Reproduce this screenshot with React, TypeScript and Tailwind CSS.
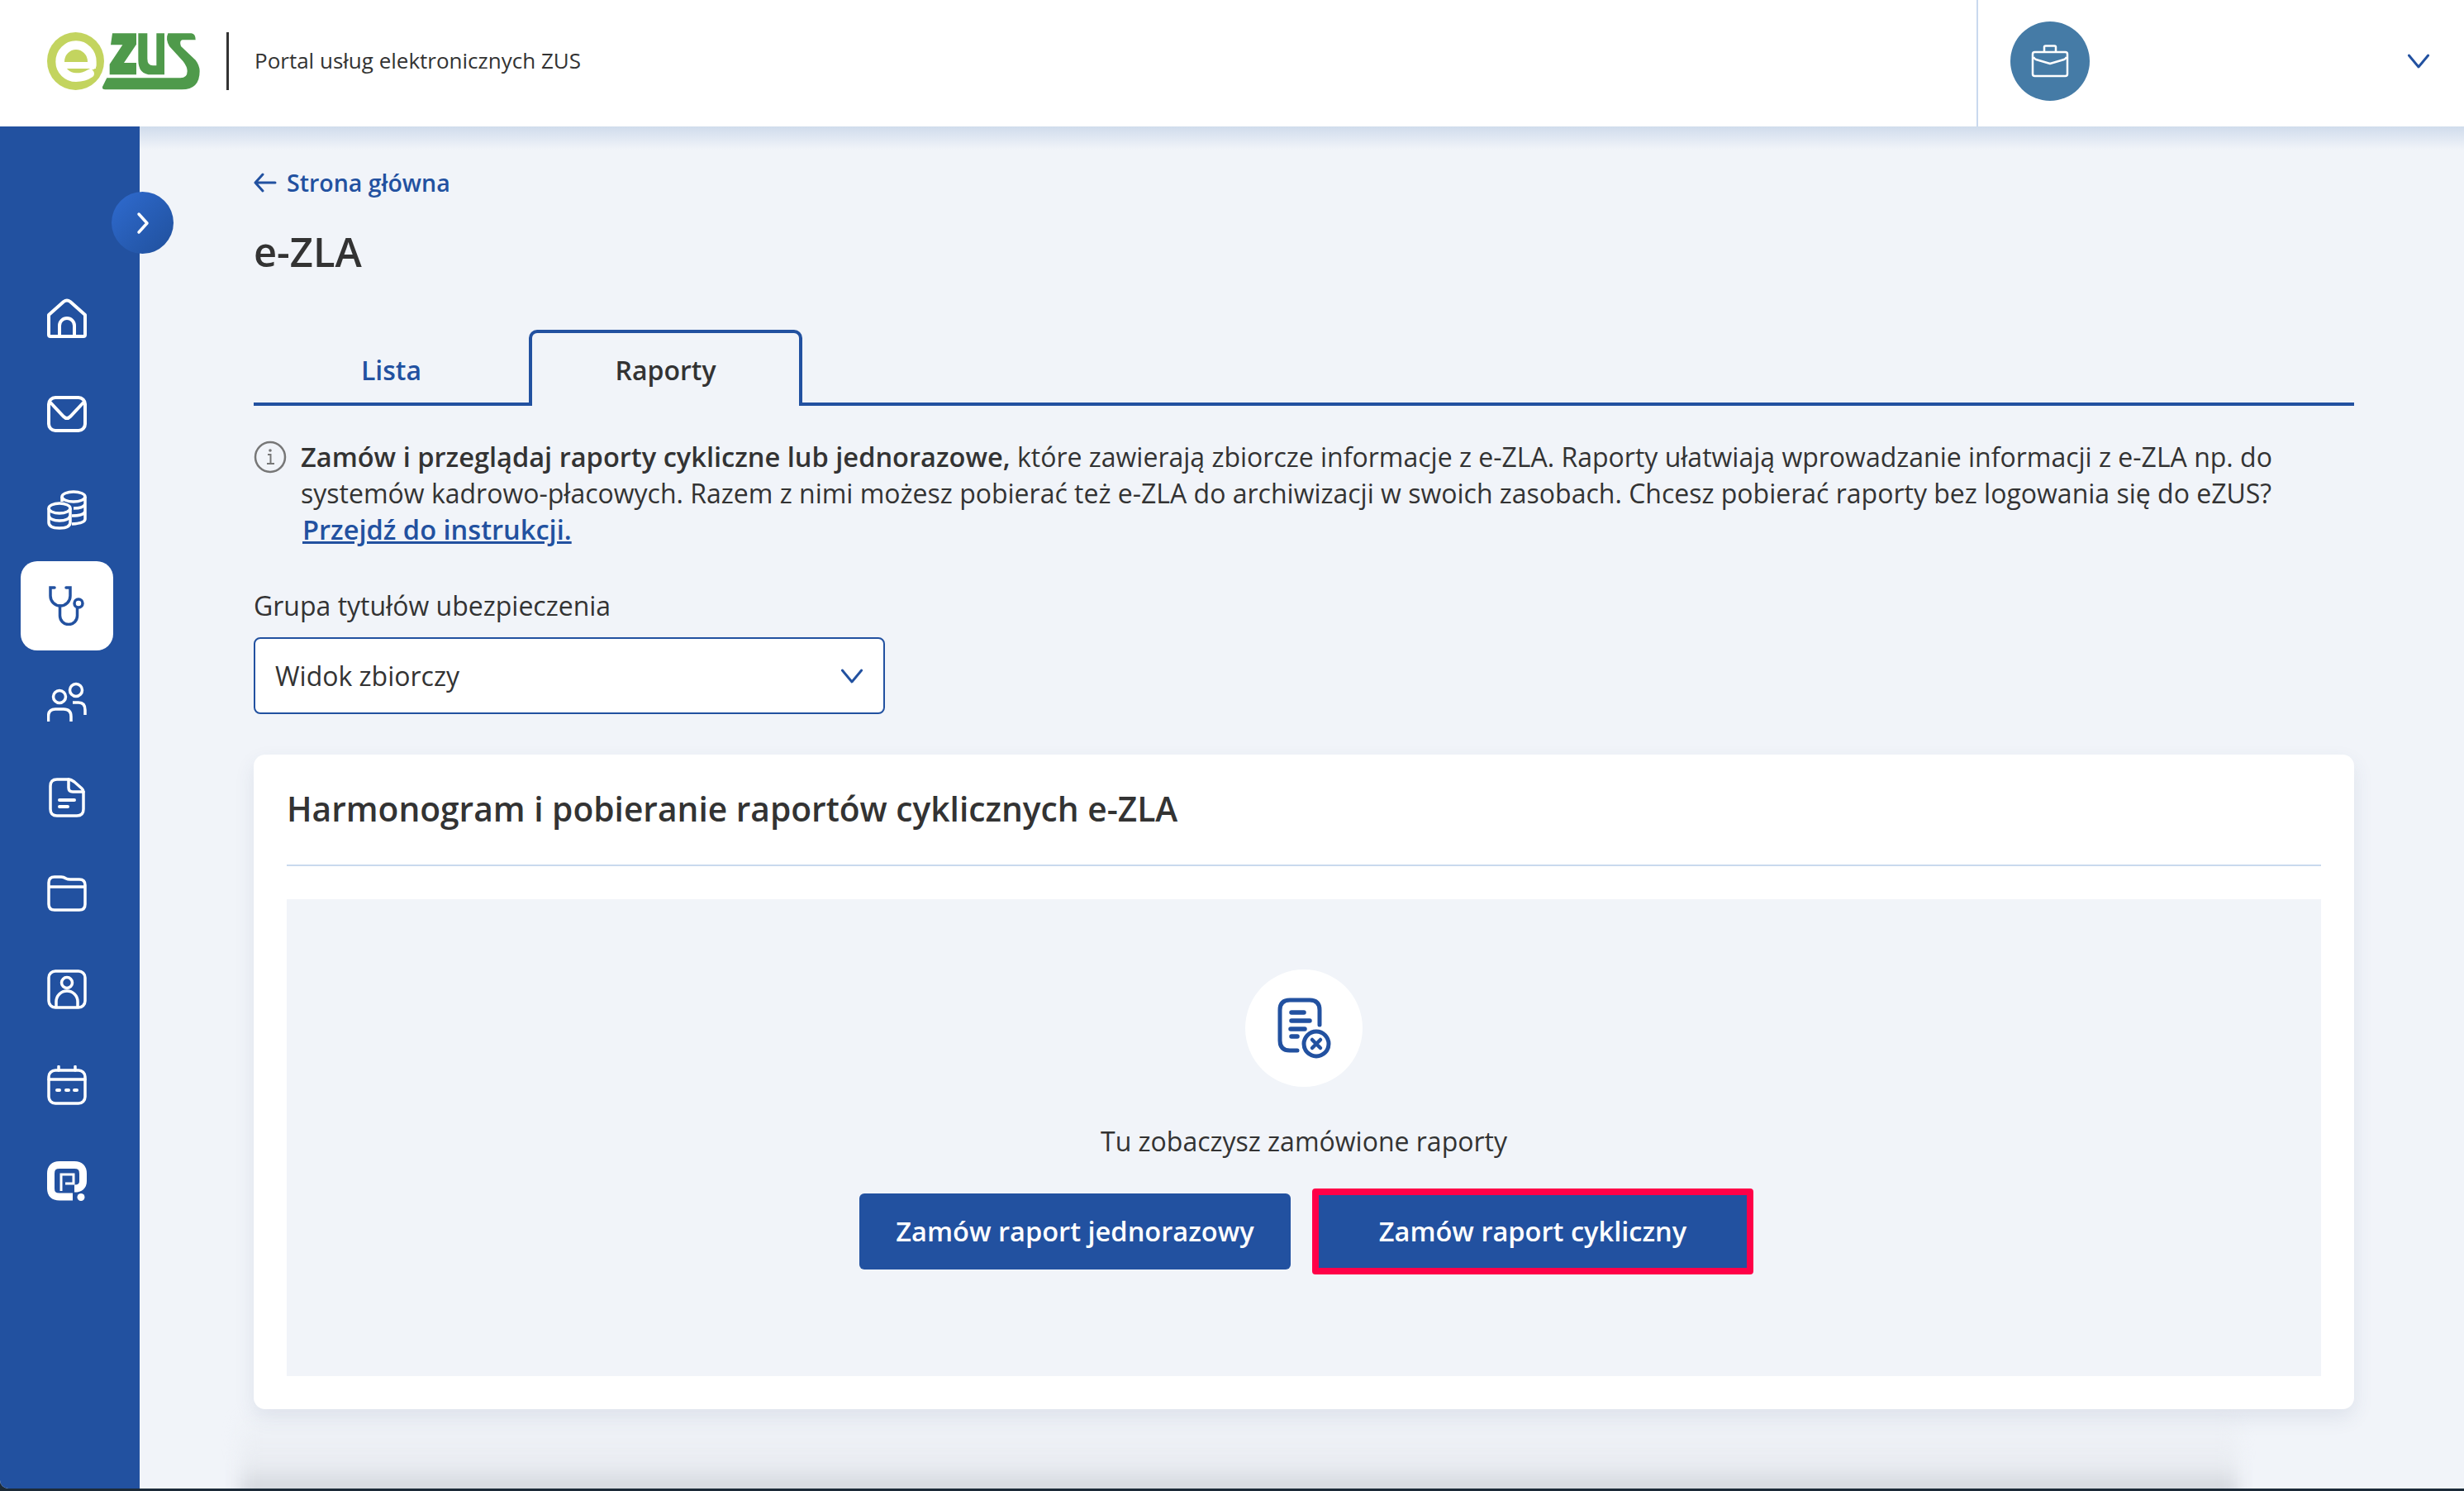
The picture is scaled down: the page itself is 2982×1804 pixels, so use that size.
const ink = "#2251a0";

const HomeIcon = () => (
  <svg width="48" height="48" viewBox="0 0 48 48" fill="none" stroke="white" strokeWidth="4" strokeLinejoin="round">
    <path d="M2 20 L20 4 Q24 1 28 4 L46 20 V44 Q46 46 44 46 H4 Q2 46 2 44 Z" />
    <path d="M15 46 V33 A9 9 0 0 1 33 33 V46" />
  </svg>
);

const MailIcon = () => (
  <svg width="48" height="44" viewBox="0 0 48 44" fill="none" stroke="white" strokeWidth="4" strokeLinecap="round">
    <rect x="2" y="2" width="44" height="40" rx="8" />
    <path d="M4 8 L20 25 Q24 29 28 25 L44 8" />
  </svg>
);

const CoinsIcon = () => (
  <svg width="48" height="48" viewBox="0 0 48 48" fill="none" stroke="white" strokeWidth="3.5">
    <ellipse cx="32" cy="8" rx="14" ry="6" />
    <path d="M18 8 V14 M46 8 V35 Q46 40 30 41 M46 17 Q44 22 32 22 M46 26 Q44 31 30 31" />
    <ellipse cx="15" cy="22" rx="13" ry="6" />
    <path d="M2 22 V39 Q2 46 15 46 Q28 46 28 39 V22 M2 31 Q4 37 15 37 Q26 37 28 31" />
  </svg>
);

const StethoscopeIcon = () => (
  <svg width="44" height="48" viewBox="0 0 44 48" fill="none" stroke={ink} strokeWidth="3.5" strokeLinecap="round">
    <path d="M7 2 H2 V12 A12 12 0 0 0 26 12 V2 H21" />
    <path d="M13.5 24 V36 A10.5 10.5 0 0 0 34.500 36 V27" />
    <circle cx="36" cy="21" r="5" />
  </svg>
);

const UsersIcon = () => (
  <svg width="48" height="48" viewBox="57 824 48 48" fill="none" stroke="white" strokeWidth="3.5">
    <circle cx="72" cy="842" r="7.500" />
    <path d="M58.500 872 V866 Q58.500 857 67 857 H77 Q86 857 86 866 V872" />
    <circle cx="92" cy="834" r="7.500" />
    <path d="M88 849 H95 Q103 849 103 858 V864" />
  </svg>
);

const FileIcon = () => (
  <svg width="48" height="48" viewBox="0 0 48 48" fill="none" stroke="white" strokeWidth="3.5" strokeLinecap="round">
    <path d="M26 2 H12 Q4 2 4 10 V38 Q4 46 12 46 H36 Q44 46 44 38 V17 Q44 15 42 13 L33 5 Q29 2 26 2 Z" />
    <path d="M26 2 V12 Q26 17 31 17 H44" />
    <path d="M15 27 H33 M15 35 H25" strokeWidth="4" />
  </svg>
);

const FolderIcon = () => (
  <svg width="48" height="44" viewBox="0 0 48 44" fill="none" stroke="white" strokeWidth="3.5">
    <path d="M2 9 Q2 2 9 2 H17 Q20 2 23 4 Q25 5 28 5 H39 Q46 5 46 12 V35 Q46 42 39 42 H9 Q2 42 2 35 Z" />
    <path d="M2 14 H46" />
  </svg>
);

const ContactIcon = () => (
  <svg width="48" height="48" viewBox="0 0 48 48" fill="none" stroke="white" strokeWidth="3.5">
    <rect x="2" y="2" width="44" height="44" rx="8" />
    <circle cx="24" cy="16" r="6.500" />
    <path d="M11 45 V39 A13 13 0 0 1 37 39 V45" />
  </svg>
);

const CalendarIcon = () => (
  <svg width="48" height="48" viewBox="0 0 48 48" fill="none" stroke="white" strokeWidth="3.500" strokeLinecap="round">
    <rect x="2" y="6" width="44" height="40" rx="8" />
    <path d="M2 17 H46 M14 1.500 V6 M34 1.500 V6" />
    <path d="M12 30 H15 M23 30 H26 M33 30 H36" strokeWidth="4" />
  </svg>
);

const PIcon = () => (
  <svg width="48" height="48" viewBox="0 0 48 48" fill="none" stroke="white">
    <path d="M31 43 H15 Q4.500 43 4.500 33 V15 Q4.500 4.500 15 4.500 H33 Q43.500 4.500 43.500 15 V24 Q43.500 33 33 33" strokeWidth="9" />
    <path d="M17 36 V16 H32 V27 H22" strokeWidth="3" />
    <circle cx="41" cy="43.500" r="4.500" fill="white" stroke="none" />
  </svg>
);

const Logo = () => (
  <svg width="200" height="85" viewBox="0 0 600 255" className="-ml-[7px]">
    <ellipse cx="124.500" cy="129" rx="103.500" ry="105" fill="#c3d45f" />
    <path d="M184 144 V131 A58 60 0 0 0 68 131 A58 57 0 0 0 126 188 Q156 188 176 174" fill="none" stroke="white" strokeWidth="32" strokeLinecap="round" />
    <path d="M72 144 H198" fill="none" stroke="white" strokeWidth="24" />
    <path d="M258 28 H345 V68 L300 135 H345 V178 H248 V140 L295 70 H252 Z" fill="#4f9a4b" />
    <path d="M352 28 H385 V120 Q385 145 405 145 H418 V28 H447 V178 H400 Q352 178 352 125 Z" fill="#4f9a4b" />
    <path
      d="M460 28 H545 Q560 30 560 52 L512 52 Q500 55 507 75 L560 125 Q575 145 575 165 Q575 232 510 232 H232 Q220 232 222 222 L238 190 H505 Q530 190 530 165 Q530 150 515 130 L465 75 Q450 50 460 28 Z"
      fill="#4f9a4b"
    />
  </svg>
);

const Chevron = ({ size }: { size: number }) => (
  <svg width={size} height={size} viewBox="0 0 24 24" fill="none" stroke={ink} strokeWidth="2.500" strokeLinecap="round" strokeLinejoin="round">
    <path d="M2 6 L12 18 L22 6" />
  </svg>
);

const menu = [
  <HomeIcon />,
  <MailIcon />,
  <CoinsIcon />,
  <StethoscopeIcon />,
  <UsersIcon />,
  <FileIcon />,
  <FolderIcon />,
  <ContactIcon />,
  <CalendarIcon />,
  <PIcon />,
];

export default function App() {
  return (
    <div className="w-[2982px] h-[1804px] bg-[#1b2a38] overflow-hidden font-['Open_Sans',sans-serif] text-[#333333]">
      <div className="h-[1801px] flex flex-col bg-[#f1f4f9] rounded-bl-[10px] overflow-hidden">
        <header className="h-[153px] shrink-0 flex bg-white">
          <div className="flex-1 flex items-center pl-[57px] pb-[6px]">
            <Logo />
            <div className="w-[3px] h-[70px] bg-[#333333] ml-[24px] mr-[31px]" />
            <span className="text-[26px]">Portal usług elektronicznych ZUS</span>
          </div>
          <div className="w-[590px] border-l-[2px] border-[#c9d9ee] flex items-center justify-between pl-[39px] pr-[41px] pb-[6px]">
            <div className="w-[96px] h-[96px] rounded-full bg-[#457ba6] flex items-center justify-center">
              <svg width="46" height="40" viewBox="0 0 46 40" fill="none" stroke="white" strokeWidth="2.500" strokeLinejoin="round">
                <rect x="2" y="9" width="42" height="29" rx="2.500" />
                <path d="M16 9 V3 Q16 1.500 17.500 1.500 H28.500 Q30 1.500 30 3 V9" />
                <path d="M3 15 Q4 17 6 18 L23 23 L40 18 Q42 17 43 15" />
              </svg>
            </div>
            <Chevron size={28} />
          </div>
        </header>

        <div className="flex-1 flex">
          <aside className="relative z-10 w-[169px] shrink-0 bg-[#2251a0] pt-[178px] pl-[25px]">
            <button className="absolute left-[135px] top-[79px] w-[75px] h-[75px] rounded-full bg-gradient-to-br from-[#2f6bd0] to-[#20509c] flex items-center justify-center">
              <svg width="20" height="28" viewBox="0 0 20 28" fill="none" stroke="white" strokeWidth="3.500" strokeLinecap="round" strokeLinejoin="round">
                <path d="M5 3 L15 14 L5 25" />
              </svg>
            </button>
            <nav className="flex flex-col gap-[8px]">
              {menu.map((icon, i) => (
                <div
                  key={i}
                  className={`w-[112px] h-[108px] rounded-[20px] flex items-center justify-center ${i === 3 ? "bg-white" : ""}`}
                >
                  {icon}
                </div>
              ))}
            </nav>
          </aside>

          <main className="relative flex-1 pl-[138px] pr-[133px]">
            <div className="absolute left-0 right-0 top-0 h-[28px] bg-gradient-to-b from-[#d0dcec] to-transparent" />
            <div className="absolute left-[122px] right-[274px] bottom-[-14px] h-[104px] bg-gradient-to-b from-transparent via-[#e9ecf1] via-60% to-[#c9cdd4] blur-[10px]" />

            <div className="relative">
              <div className="pt-[46px] h-[90px] flex items-center gap-[12px] text-[#2251a0] text-[28.500px] font-semibold leading-[44px]">
                <svg width="28" height="24" viewBox="0 0 28 24" fill="none" stroke={ink} strokeWidth="3" strokeLinecap="round" strokeLinejoin="round">
                  <path d="M26 12 H2 M11 2 L2 12 L11 22" />
                </svg>
                Strona główna
              </div>
              <h1 className="mt-[33px] text-[48.800px] leading-[56px] font-semibold">e-ZLA</h1>

              <div className="mt-[67px] h-[92px] flex">
                <div className="w-[333px] border-b-4 border-[#2251a0] pt-[9px] flex items-center justify-center text-[#2251a0] text-[32px] font-semibold">
                  Lista
                </div>
                <div className="w-[331px] border-4 border-b-0 border-[#2251a0] rounded-t-[10px] pt-[2px] flex items-center justify-center text-[32px] font-semibold">
                  Raporty
                </div>
                <div className="flex-1 border-b-4 border-[#2251a0]" />
              </div>

              <div className="mt-[40px] flex gap-[17px]">
                <svg className="shrink-0 mt-[2px]" width="40" height="40" viewBox="0 0 40 40" fill="none" stroke="#777777" strokeWidth="2.500">
                  <circle cx="20" cy="20" r="18" />
                  <path d="M17 17 H20.500 V28 M16 28 H25" strokeWidth="2" />
                  <circle cx="20" cy="12" r="1.800" fill="#777777" stroke="none" />
                </svg>
                <p className="text-[32px] leading-[44px]">
                  <span className="font-semibold text-[32.600px]">Zamów i przeglądaj raporty cykliczne lub jednorazowe,</span> które zawierają zbiorcze informacje z e-ZLA. Raporty ułatwiają wprowadzanie informacji z e-ZLA np. do systemów kadrowo-płacowych. Razem z nimi możesz pobierać też e-ZLA do archiwizacji w swoich zasobach. Chcesz pobierać raporty bez logowania się do eZUS?
                  <br />
                  <a className="text-[#2251a0] text-[32.600px] font-semibold underline ml-[2px]">Przejdź do instrukcji.</a>
                </p>
              </div>

              <div className="mt-[48px] text-[32px] leading-[44px]">Grupa tytułów ubezpieczenia</div>
              <div className="mt-[16px] w-[764px] h-[93px] bg-white border-[2px] border-[#2251a0] rounded-[8px] flex items-center justify-between pl-[24px] pr-[24px] text-[32px]">
                Widok zbiorczy
                <Chevron size={28} />
              </div>

              <section className="mt-[49px] h-[792px] bg-white rounded-[14px] px-[40px] pt-[37px] shadow-[0_10px_24px_rgba(60,80,120,0.10)]">
                <h2 className="text-[40.700px] leading-[56px] font-semibold">Harmonogram i pobieranie raportów cyklicznych e-ZLA</h2>
                <div className="mt-[40px] h-[2px] bg-[#c9d9ee]" />
                <div className="mt-[40px] h-[577px] bg-[#f1f4f9] pt-[85px] flex flex-col items-center">
                  <div className="w-[142px] h-[142px] rounded-full bg-white">
                    <svg width="142" height="142" viewBox="1507 1173 142 142" fill="none" stroke={ink} strokeWidth="5" strokeLinecap="round">
                      <path d="M1597 1240 V1222 Q1597 1210 1585 1210 H1561 Q1549 1210 1549 1222 V1259 Q1549 1271 1561 1271 H1570" />
                      <path d="M1563 1225 H1578 M1563 1235 H1585 M1562 1245 H1579 M1563 1254 H1570" strokeWidth="5.500" />
                      <circle cx="1593" cy="1263" r="15" />
                      <path d="M1588 1258 L1598 1268 M1598 1258 L1588 1268" strokeWidth="4.500" />
                    </svg>
                  </div>
                  <p className="mt-[44px] text-[32px] leading-[44px]">Tu zobaczysz zamówione raporty</p>
                  <div className="mt-[35px] ml-[6px] flex items-center gap-[26px]">
                    <button className="w-[522px] h-[92px] rounded-[6px] bg-[#2251a0] text-white text-[32.600px] font-semibold">
                      Zamów raport jednorazowy
                    </button>
                    <button className="w-[534px] h-[104px] box-border border-[8px] border-[#ff0048] rounded-[4px] bg-[#2251a0] text-white text-[32.600px] font-semibold">
                      Zamów raport cykliczny
                    </button>
                  </div>
                </div>
              </section>
            </div>
          </main>
        </div>
      </div>
    </div>
  );
}
